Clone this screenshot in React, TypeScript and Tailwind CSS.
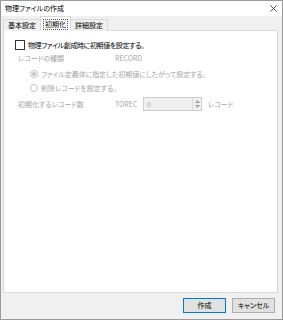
const font = "[font-family:'Noto_Sans_CJK_JP','Noto_Sans',sans-serif] [font-feature-settings:'palt']";

const Tab = ({ label, active }: { label: string; active?: boolean }) =>
  active ? (
    <div className="h-[15px] px-[2px] -mx-[1px] bg-white border border-b-0 border-[#d9d9d9] flex items-center relative z-10 text-[7px] text-black leading-none">
      <span className="px-[1px] py-[1px] border border-dotted border-[#555]">{label}</span>
    </div>
  ) : (
    <div className="h-[12px] px-[4px] bg-[#f0f0f0] border border-b-0 border-[#d9d9d9] flex items-center text-[7px] text-black leading-none">
      {label}
    </div>
  );

export default function App() {
  return (
    <div
      className={`w-[283px] h-[320px] bg-[#f0f0f0] border border-[#9a9a9a] flex flex-col ${font}`}
    >
      {/* Title bar */}
      <div className="h-[15px] bg-white flex items-center justify-between pl-[4px] pr-[5px]">
        <span className="text-[7px] text-black leading-none">物理ファイルの作成</span>
        <svg width="7" height="7" viewBox="0 0 7 7">
          <path d="M0.5 0.5 L6.5 6.5 M6.5 0.5 L0.5 6.5" stroke="#222" strokeWidth="0.8" />
        </svg>
      </div>

      {/* Tabs */}
      <div className="h-[15px] -mb-px flex items-end px-[2px] relative z-10">
        <Tab label="基本設定" />
        <Tab label="初期化" active />
        <Tab label="詳細設定" />
      </div>

      {/* Panel */}
      <div className="h-[263px] ml-[2px] mr-[4px] bg-white border border-[#d9d9d9] flex flex-col text-[7px] leading-none">
        <div className="mt-[9px] h-[10px] pl-[11px] flex items-center gap-[3px] text-black">
          <div className="w-[10px] h-[10px] border border-[#333] bg-white" />
          <span className="tracking-[-0.4px]">物理ファイル創成時に初期値を設定する。</span>
        </div>

        <div className="mt-[3px] h-[10px] pl-[14px] flex items-center text-[#a6a6a6]">
          <span className="w-[97px]">レコードの種類</span>
          <span>RECORD</span>
        </div>

        <div className="mt-[6px] h-[10px] pl-[26px] flex items-center gap-[3px] text-[#a6a6a6]">
          <div className="w-[8px] h-[8px] rounded-full border border-[#c4c4c4] bg-white flex items-center justify-center">
            <div className="w-[4px] h-[4px] rounded-full bg-[#c4c4c4]" />
          </div>
          <span className="tracking-[-0.1px]">ファイル定義体に指定した初期値にしたがって設定する。</span>
        </div>

        <div className="mt-[4px] h-[10px] pl-[26px] flex items-center gap-[3px] text-[#a6a6a6]">
          <div className="w-[8px] h-[8px] rounded-full border border-[#c4c4c4] bg-white" />
          <span>削除レコードを設定する。</span>
        </div>

        <div className="mt-[4px] h-[14px] pl-[14px] flex items-center text-[#a6a6a6]">
          <span className="w-[97px]">初期化するレコード数</span>
          <span className="w-[28px]">TOREC</span>
          <div className="w-[59px] h-[14px] border border-[#cccccc] bg-[#f0f0f0] flex items-stretch">
            <span className="flex-1 pl-[3px] flex items-center text-[#a6a6a6]">0</span>
            <div className="w-[9px] border-l border-[#dcdcdc] flex flex-col items-center justify-center gap-[2px]">
              <svg width="5" height="3" viewBox="0 0 5 3">
                <path d="M0 3 L2.5 0 L5 3 Z" fill="#a0a0a0" />
              </svg>
              <svg width="5" height="3" viewBox="0 0 5 3">
                <path d="M0 0 L2.5 3 L5 0 Z" fill="#a0a0a0" />
              </svg>
            </div>
          </div>
          <span className="ml-[6px]">レコード</span>
        </div>
      </div>

      {/* Buttons */}
      <div className="flex-1 flex items-start justify-end gap-[6px] pt-[5px] pr-[7px]">
        <button className="w-[43px] h-[15px] bg-[#e1e1e1] border border-[#0078d7] text-[7px] text-black leading-none flex items-center justify-center">
          作成
        </button>
        <button className="w-[43px] h-[15px] bg-[#e1e1e1] border border-[#adadad] text-[7px] text-black leading-none flex items-center justify-center">
          キャンセル
        </button>
      </div>
    </div>
  );
}
